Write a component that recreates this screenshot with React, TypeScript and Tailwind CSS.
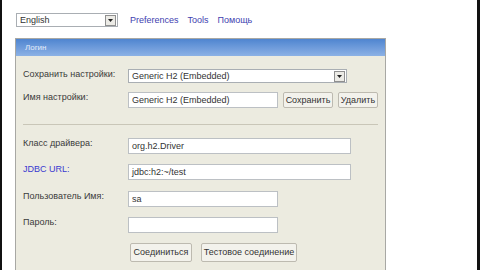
const font = { fontFamily: '"Liberation Sans", Arial, sans-serif' };

function Arrow() {
  return (
    <span className="flex h-[11px] w-[11px] items-center justify-center border border-[#8f8f8f] bg-[#ecebe6]">
      <svg width="5" height="3" viewBox="0 0 5 3">
        <path d="M0 0h5L2.5 3z" fill="#222" />
      </svg>
    </span>
  );
}

function Select({ value, width }: { value: string; width: string }) {
  return (
    <div className={`flex h-[14px] items-center justify-between border border-[#a9aeb3] bg-white pl-[3px] pr-[1px] ${width}`}>
      <span className="whitespace-nowrap text-[9px] leading-none text-[#333]">{value}</span>
      <Arrow />
    </div>
  );
}

function Input({ value = "", width }: { value?: string; width: string }) {
  return (
    <div className={`flex h-[16px] items-center whitespace-nowrap border border-[#bcc0c4] bg-white pl-[3px] text-[9px] leading-none text-[#333] ${width}`}>
      {value}
    </div>
  );
}

function Btn({ label, className = "" }: { label: string; className?: string }) {
  return (
    <div className={`flex items-center justify-center whitespace-nowrap rounded-[2px] border border-[#bdbab0] bg-[#f3f2ec] text-[9px] leading-none text-[#333] ${className}`}>
      {label}
    </div>
  );
}

function Row({ label, blue, children, className = "" }: { label: string; blue?: boolean; children: React.ReactNode; className?: string }) {
  return (
    <div className={`flex items-start ${className}`}>
      <div className={`w-[105px] whitespace-nowrap pt-[1px] text-[9px] leading-none ${blue ? "text-[#3a3ad0]" : "text-[#3a3a3a]"}`}>{label}</div>
      <div className="flex items-start gap-[5px]">{children}</div>
    </div>
  );
}

export default function App() {
  return (
    <main style={font} className="h-[270px] w-[480px] overflow-hidden border-l-2 border-r-[3px] border-[#111] bg-white">
      <div className="flex items-center pl-[14px] pt-[13px]">
        <Select value="English" width="w-[102px]" />
        <nav className="ml-[12px] flex gap-[9px] text-[9px] leading-none text-[#4141b0]">
          <span>Preferences</span>
          <span>Tools</span>
          <span>Помощь</span>
        </nav>
      </div>

      <section className="ml-[13px] mt-[11px] h-[240px] w-[371px] border border-[#a8a8a4] bg-[#ecebe0]">
        <div className="flex h-[17px] items-center bg-gradient-to-b from-[#4f85d0] to-[#8cb1e5] pl-[9px] text-[8px] leading-none text-[#e3ecfa]">
          Логин
        </div>

        <div className="pl-[7px]">
          <Row label="Сохранить настройки:" className="mt-[13px]">
            <Select value="Generic H2 (Embedded)" width="w-[219px]" />
          </Row>
          <Row label="Имя настройки:" className="mt-[9px]">
            <Input value="Generic H2 (Embedded)" width="w-[150px]" />
            <Btn label="Сохранить" className="h-[16px] w-[50px]" />
            <Btn label="Удалить" className="h-[16px] w-[40px]" />
          </Row>

          <div className="mr-[7px] mt-[16px] h-[2px] border-t border-[#c9c6b8] border-b-white" />

          <Row label="Класс драйвера:" className="mt-[12px]">
            <Input value="org.h2.Driver" width="w-[223px]" />
          </Row>
          <Row label="JDBC URL:" blue className="mt-[10px]">
            <Input value="jdbc:h2:~/test" width="w-[223px]" />
          </Row>
          <Row label="Пользователь Имя:" className="mt-[11px]">
            <Input value="sa" width="w-[150px]" />
          </Row>
          <Row label="Пароль:" className="mt-[10px]">
            <Input width="w-[150px]" />
          </Row>
          <div className="ml-[107px] mt-[10px] flex gap-[9px]">
            <Btn label="Соединиться" className="h-[19px] w-[62px]" />
            <Btn label="Тестовое соединение" className="h-[19px] w-[96px]" />
          </div>
        </div>
      </section>
    </main>
  );
}
